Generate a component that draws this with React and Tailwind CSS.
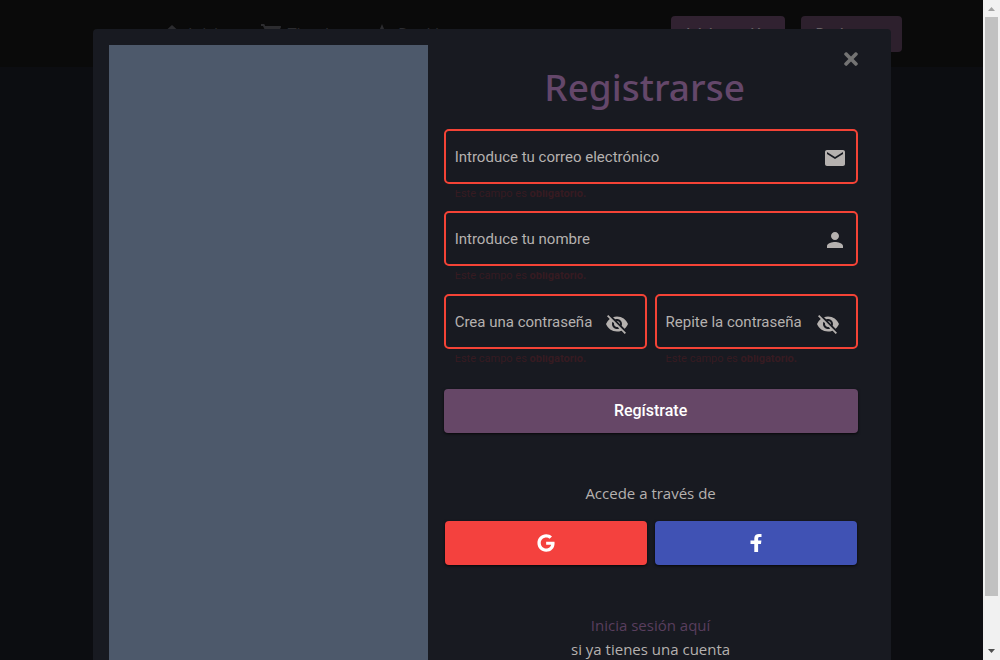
import { useState } from "react";
import {
  MdEmail,
  MdPerson,
  MdVisibilityOff,
  MdVisibility,
  MdHome,
  MdShoppingCart,
  MdNavigation,
} from "react-icons/md";
import { FaTimes, FaGoogle } from "react-icons/fa";

function FacebookIcon() {
  return (
    <svg viewBox="0 0 12 18" className="h-[18px] w-3 fill-current" aria-hidden="true">
      <path d="M11.500 0.100V3H9.800C8.400 3 8.100 3.700 8.100 4.700V6.600H11.400L11 9.900H8.100V18H4.300V9.900H0.500V6.600H4.300V4.200C4.300 1.500 6.200 0 8.900 0C10.100 0 11.100 0.050 11.500 0.100Z" />
    </svg>
  );
}

function Field({ id, label, type = "text", icon: Icon, secret = false }) {
  const [value, setValue] = useState("");
  const [shown, setShown] = useState(false);
  const Eye = shown ? MdVisibility : MdVisibilityOff;
  return (
    <div className="min-w-0 flex-1 font-[Roboto,sans-serif]">
      <div
        className={`flex h-[55px] items-center rounded-[5px] border-2 border-[#f44336] pl-[9px] text-[#b5b1af] ${secret ? "pr-4" : "pr-[9px]"}`}
      >
        <div className="grid h-full min-w-0 flex-1 items-center">
          <label
            htmlFor={id}
            className={`col-start-1 row-start-1 whitespace-nowrap text-[15px] leading-5 ${value ? "invisible" : ""}`}
          >
            {label}
          </label>
          <input
            id={id}
            type={secret && shown ? "text" : type}
            value={value}
            onChange={(e) => setValue(e.target.value)}
            className="col-start-1 row-start-1 h-full w-full min-w-0 bg-transparent text-[15px] outline-none"
          />
        </div>
        {secret ? (
          <button type="button" aria-label="Mostrar" onClick={() => setShown(!shown)} className="mt-1 shrink-0">
            <Eye className="size-6" />
          </button>
        ) : (
          <Icon className="mt-0.5 size-6 shrink-0" />
        )}
      </div>
      <p className="mt-1.5 flex h-2.5 items-end overflow-hidden pl-[9px] text-[11px] leading-3 text-[#361b21]">
        <span className="whitespace-nowrap pl-0.5">
          Este campo es <b>obligatorio.</b>
        </span>
      </p>
    </div>
  );
}

function Header() {
  return (
    <header className="flex h-[67px] items-start bg-[#0a0a0a] pl-[160px] pr-[81px] pt-4 text-[#2c2c2f]">
      <nav className="flex flex-1 gap-8 pt-1.5 text-[16px] leading-6">
        <a href="#inicio" className="flex gap-1"><MdHome className="size-6" />Inicio</a>
        <a href="#tienda" className="flex gap-1"><MdShoppingCart className="size-6" />Tienda</a>
        <a href="#ranking" className="flex gap-1"><MdNavigation className="size-6" />Ranking</a>
      </nav>
      <div className="flex gap-4 font-[Roboto,sans-serif] text-[14px] font-medium text-[#6b6468]">
        <button type="button" className="h-9 w-[114px] rounded bg-[#312231]">Iniciar sesión</button>
        <button type="button" className="h-9 w-[101px] rounded bg-[#2d202d]">Registrarse</button>
      </div>
    </header>
  );
}

function SignUpDialog() {
  return (
    <section
      role="dialog"
      aria-labelledby="titulo"
      className="flex w-full max-w-[798px] rounded-t bg-[#181a21] p-4 pb-12"
    >
      <div className="w-5/12 shrink-0 bg-[#4d596b]" />
      <form className="flex min-w-0 flex-1 flex-col pl-4 pr-[17px]" onSubmit={(e) => e.preventDefault()}>
        <div className="-mr-[3px] flex h-6 items-center justify-end">
          <button type="button" aria-label="Cerrar" className="mt-1 text-[#737373]">
            <FaTimes className="size-5" />
          </button>
        </div>
        <h1 id="titulo" className="pr-3 text-center font-['Segoe_UI','Noto_Sans',sans-serif] text-[37px] font-medium leading-9 text-[#64476a]">
          Registrarse
        </h1>
        <div className="mt-6 flex flex-col gap-3">
          <div className="flex flex-col gap-[11px]">
            <Field id="correo" type="email" label="Introduce tu correo electrónico" icon={MdEmail} />
            <Field id="nombre" label="Introduce tu nombre" icon={MdPerson} />
          </div>
          <div className="flex gap-2">
            <Field id="clave" type="password" label="Crea una contraseña" secret />
            <Field id="clave2" type="password" label="Repite la contraseña" secret />
          </div>
        </div>
        <button type="submit" className="mt-6 h-11 rounded bg-[#664767] font-[Roboto,sans-serif] text-[16px] font-medium text-white shadow-sm shadow-black/60">
          Regístrate
        </button>
        <p className="mt-12 text-center text-[15px] leading-6 text-[#b5b1af]">Accede a través de</p>
        <div className="mt-4 flex gap-2 px-px text-white">
          <button type="button" aria-label="Google" className="flex h-11 flex-1 items-center justify-center rounded bg-[#f4413e] shadow-sm shadow-black/60">
            <FaGoogle className="size-[18px]" />
          </button>
          <button type="button" aria-label="Facebook" className="flex h-11 flex-1 items-center justify-center rounded bg-[#4052b4] shadow-sm shadow-black/60">
            <FacebookIcon />
          </button>
        </div>
        <p className="mt-12 text-center text-[15px] leading-6 text-[#b5b1af]">
          <a href="#iniciar" className="block text-[#593e5e]">Inicia sesión aquí</a>
          si ya tienes una cuenta
        </p>
      </form>
    </section>
  );
}

function ScrollRail() {
  return (
    <div aria-hidden="true" className="flex w-[17px] shrink-0 flex-col items-center bg-[#f1f1f1]">
      <svg viewBox="0 0 17 17" className="size-[17px] shrink-0 fill-[#a3a3a3]"><path d="M5 11L8.500 7L12 11Z" /></svg>
      <div className="w-[13px] flex-[579] bg-[#c1c1c1]" />
      <div className="flex-[47]" />
      <svg viewBox="0 0 17 17" className="size-[17px] shrink-0 fill-[#505050]"><path d="M5 6L8.500 10L12 6Z" /></svg>
    </div>
  );
}

export default function App() {
  return (
    <div className="flex h-screen overflow-hidden bg-[#0c0d11] font-['Segoe_UI','Open_Sans','Noto_Sans',sans-serif]">
      <main className="relative min-w-0 flex-1 overflow-hidden">
        <Header />
        <div className="absolute inset-x-0 top-0 flex justify-center pt-[29px]">
          <SignUpDialog />
        </div>
      </main>
      <ScrollRail />
    </div>
  );
}
